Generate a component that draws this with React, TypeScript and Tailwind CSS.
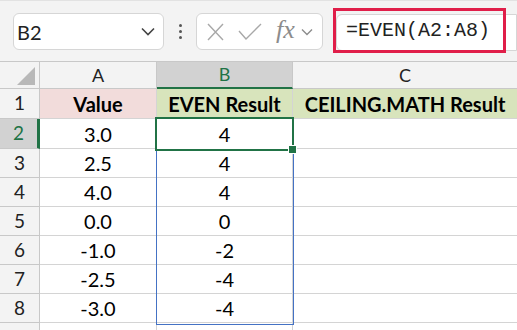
import React from "react";

const rows = [
  { n: 1, a: "Value", b: "EVEN Result", c: "CEILING.MATH Result", head: true },
  { n: 2, a: "3.0", b: "4", c: "" },
  { n: 3, a: "2.5", b: "4", c: "" },
  { n: 4, a: "4.0", b: "4", c: "" },
  { n: 5, a: "0.0", b: "0", c: "" },
  { n: 6, a: "-1.0", b: "-2", c: "" },
  { n: 7, a: "-2.5", b: "-4", c: "" },
  { n: 8, a: "-3.0", b: "-4", c: "" },
];

const heights = ["h-[30px]", "h-[30px]", "h-[29px]", "h-[29px]", "h-[29px]", "h-[29px]", "h-[29px]", "h-[29px]"];

const App: React.FC = () => {
  return (
    <div className="w-[517px] h-[330px] overflow-hidden bg-white font-['Lato','Liberation_Sans',sans-serif] text-black">
      {/* Formula bar */}
      <div className="h-[61px] bg-[#f3f3f3] border-t border-[#e2e2e2] flex items-start pt-[12px] pl-[13px]">
        <div className="w-[151px] h-[37px] bg-white border border-[#d6d6d6] rounded-[6px] flex items-center justify-between pl-[3px] pr-[8px]">
          <span className="text-[20px] text-[#222]">B2</span>
          <svg width="14" height="9" viewBox="0 0 14 9" fill="none" stroke="#444" strokeWidth="1.6">
            <path d="M1 1.5 L7 7.5 L13 1.5" />
          </svg>
        </div>
        <div className="w-[32px] h-[37px] flex flex-col items-center justify-center gap-[3px]">
          <span className="w-[3px] h-[3px] bg-[#555] rounded-full" />
          <span className="w-[3px] h-[3px] bg-[#555] rounded-full" />
          <span className="w-[3px] h-[3px] bg-[#555] rounded-full" />
        </div>
        <div className="w-[127px] h-[37px] bg-white border border-[#d6d6d6] rounded-[6px] flex items-center pl-[10px] gap-[14px]">
          <svg width="17" height="18" viewBox="0 0 17 18" fill="none" stroke="#a8a8a8" strokeWidth="1.4">
            <path d="M1 1 L16 17 M16 1 L1 17" />
          </svg>
          <svg width="24" height="17" viewBox="0 0 24 17" fill="none" stroke="#a8a8a8" strokeWidth="1.4">
            <path d="M1 8 L8 16 L23 1" />
          </svg>
          <div className="flex items-center gap-[6px]">
            <span className="font-['Liberation_Serif',serif] italic text-[26px] text-[#8c8c8c] leading-none -mt-[4px]">fx</span>
            <svg width="12" height="8" viewBox="0 0 12 8" fill="none" stroke="#8c8c8c" strokeWidth="1.4">
              <path d="M1 1.5 L6 6.5 L11 1.5" />
            </svg>
          </div>
        </div>
        <div className="ml-[10px] -mt-[5px] h-[45px] flex-1 relative">
          <div className="absolute left-[3px] right-0 top-[6px] h-[37px] bg-white border border-[#d6d6d6] rounded-l-[6px]" />
          <div className="absolute left-0 top-0 w-[173px] h-[45px] border-[3px] border-[#e01e49] flex items-center pl-[10px]">
            <span className="font-['Liberation_Mono',monospace] text-[20px] text-[#222]">=EVEN(A2:A8)</span>
          </div>
        </div>
      </div>

      {/* Grid */}
      <div className="relative">
        <div className="grid grid-cols-[40px_117px_136px_1fr]">
          <div className="h-[28px] bg-[#f3f3f3] border-r border-b border-[#c8c8c8] border-t relative">
            <svg className="absolute left-[16px] top-[4px]" width="20" height="20" viewBox="0 0 20 20">
              <path d="M19 1 L19 19 L1 19 Z" fill="#b8b8b8" />
            </svg>
          </div>
          <div className="h-[28px] bg-[#f3f3f3] border-r border-b border-t border-[#c8c8c8] flex items-center justify-center text-[18px] text-[#222]">A</div>
          <div className="h-[28px] bg-[#d2d2d2] border-r border-t border-[#c8c8c8] border-b-[2px] border-b-[#217346] flex items-center justify-center text-[18px] text-[#217346]">B</div>
          <div className="h-[28px] bg-[#f3f3f3] border-b border-t border-[#c8c8c8] flex items-center justify-center text-[18px] text-[#222]">C</div>

          {rows.map((r, i) => (
            <React.Fragment key={r.n}>
              <div
                className={`${heights[i]} border-b flex items-center justify-center text-[19px] ${
                  r.n === 2
                    ? "bg-[#d2d2d2] text-[#217346] border-r-[3px] border-r-[#217346] border-b-[#c8c8c8]"
                    : "bg-[#f3f3f3] text-[#222] border-r border-[#c8c8c8]"
                }`}
              >
                {r.n}
              </div>
              <div
                className={`${heights[i]} border-r border-b border-[#d4d4d4] flex items-center justify-center text-[20px] ${
                  r.head ? "bg-[#f2dcdb] font-bold" : ""
                }`}
              >
                {r.a}
              </div>
              <div
                className={`${heights[i]} border-r border-b border-[#d4d4d4] flex items-center justify-center text-[20px] ${
                  r.head ? "bg-[#d8e4bc] font-bold whitespace-nowrap" : ""
                }`}
              >
                {r.b}
              </div>
              <div
                className={`${heights[i]} border-b border-[#d4d4d4] flex items-center justify-center text-[20px] ${
                  r.head ? "bg-[#d8e4bc] font-bold whitespace-nowrap" : ""
                }`}
              >
                {r.c}
              </div>
            </React.Fragment>
          ))}
          <div className="h-[10px] bg-[#f3f3f3] border-r border-[#c8c8c8]" />
          <div className="h-[10px] border-r border-[#d4d4d4]" />
          <div className="h-[10px] border-r border-[#d4d4d4]" />
          <div className="h-[10px]" />
        </div>

        {/* Range and active cell overlays */}
        <div className="absolute left-[156px] top-[57px] w-[138px] h-[207px] border-[1.5px] border-[#4472c4] pointer-events-none" />
        <div className="absolute left-[155px] top-[56px] w-[139px] h-[34px] bg-white border-[2.5px] border-[#217346] pointer-events-none flex items-center justify-center text-[20px]">4</div>
        <div className="absolute left-[288px] top-[84px] w-[9px] h-[9px] bg-[#217346] border border-white pointer-events-none" />
      </div>
    </div>
  );
};

export default App;
